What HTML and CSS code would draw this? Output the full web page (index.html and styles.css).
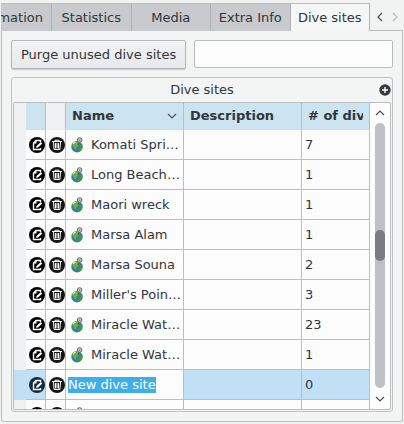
FILE: index.html
```html
<!DOCTYPE html>
<html lang="en">
<head>
<meta charset="utf-8">
<title>Dive sites</title>
<link rel="stylesheet" href="styles.css">
</head>
<body>
<svg class="defs" width="0" height="0" aria-hidden="true">
  <symbol id="edit" viewBox="0 0 16 16">
    <circle cx="8" cy="8" r="8" fill="var(--disc)"/>
    <path d="M11.5 5V3.5H7L4.5 6V12.5H11.5V11" fill="none" stroke="#fff" stroke-width="1.4"/>
    <path d="M4.5 6.5H7.5V3.5Z" fill="#fff"/>
    <path d="M7 10.8L7.5 8.9L11.8 4.9L13.3 6.4L9 10.4Z" fill="#fff"/>
  </symbol>
  <symbol id="trash" viewBox="0 0 16 16">
    <circle cx="8" cy="8" r="8" fill="#151515"/>
    <path d="M3 4.5H13M6 4.5V3.2H10V4.5M4.5 5L5.1 12.5H10.9L11.5 5M6.5 6V11.5M8 6V11.5M9.5 6V11.5" fill="none" stroke="#fff" stroke-width="1"/>
  </symbol>
  <symbol id="globe" viewBox="0 0 16 16">
    <circle cx="7" cy="9.8" r="5.7" fill="#3779b0"/>
    <path d="M2 8Q3 4.5 6.3 4.1L8.8 5.4L8 7L8.8 8.4L6.2 10.2L5.8 13L4.2 11.5L3.2 9.2Z" fill="#67b436"/>
    <path d="M9.4 8.3L12.4 7.5Q13 11 10.6 13.8L8.3 14.8L7.2 12.6L9.4 10.6Z" fill="#4a9a2b"/>
    <path d="M3 7Q4 5.4 5.6 5.2" fill="none" stroke="#d8f0ca" stroke-width="1.2"/>
    <circle cx="9.6" cy="3" r="2.3" fill="#d5d5d5" stroke="#666" stroke-width="1"/>
    <path d="M8.8 3.1H10.4M9 5.4L8 8" stroke="#555" stroke-width="1"/>
  </symbol>
</svg>
<nav class="tabs">
  <div class="tablist" role="tablist">
    <button class="tab first" role="tab"><span>Information</span></button>
    <button class="tab" role="tab">Statistics</button>
    <button class="tab" role="tab">Media</button>
    <button class="tab" role="tab">Extra Info</button>
    <button class="tab active" role="tab" aria-selected="true">Dive sites</button>
  </div>
  <div class="tabscroll">
    <button class="plain" aria-label="Previous tabs"><svg width="8" height="12" viewBox="0 0 8 12"><path d="M6 2L2 6L6 10" fill="none" stroke="#4d5154" stroke-width="1.2"/></svg></button>
    <button class="plain" aria-label="Next tabs" disabled><svg width="8" height="12" viewBox="0 0 8 12"><path d="M2 2L6 6L2 10" fill="none" stroke="#b5b7b9" stroke-width="1.2"/></svg></button>
  </div>
</nav>
<main class="panel">
  <div class="toolbar">
    <button class="purge">Purge unused dive sites</button>
    <input class="filter" type="text" aria-label="Filter dive sites">
  </div>
  <section class="group">
    <header class="grouphead">
      <h1>Dive sites</h1>
      <button class="plain add" aria-label="Add dive site"><svg width="12" height="12" viewBox="0 0 12 12"><circle cx="6" cy="6" r="5.7" fill="#35393c"/><path d="M6 3V9M3 6H9" stroke="#fff" stroke-width="1.4"/></svg></button>
    </header>
    <div class="frame">
      <div class="view">
        <table>
          <colgroup><col class="c-row"><col class="c-icon"><col class="c-icon"><col><col><col class="c-count"></colgroup>
          <thead>
            <tr><th class="stub"></th><th class="first"></th><th class="pale"></th><th><div class="sort">Name<svg width="10" height="6" viewBox="0 0 10 6"><path d="M1 1L5 5L9 1" fill="none" stroke="#4d5154" stroke-width="1.1"/></svg></div></th><th>Description</th><th><div class="clip"># of dives</div></th></tr>
          </thead>
          <tbody id="sites"></tbody>
        </table>
      </div>
      <div class="scrollbar">
        <button class="plain" aria-label="Scroll up"><svg width="10" height="6" viewBox="0 0 10 6"><path d="M1 5L5 1L9 5" fill="none" stroke="#4d5154" stroke-width="1.2"/></svg></button>
        <div class="track"><div class="thumb"></div></div>
        <button class="plain" aria-label="Scroll down"><svg width="10" height="6" viewBox="0 0 10 6"><path d="M1 1L5 5L9 1" fill="none" stroke="#4d5154" stroke-width="1.2"/></svg></button>
      </div>
    </div>
  </section>
</main>
<script src="sites.js"></script>
</body>
</html>
```
FILE: sites.js
```js
const sites = [
  ["Komati Springs", 7], ["Long Beach Simon's Town", 1], ["Maori wreck", 1],
  ["Marsa Alam", 1], ["Marsa Souna", 2], ["Miller's Point Slipway", 3],
  ["Miracle Waters", 23], ["Miracle Waters", 1], ["New dive site", 0, true],
  ["North Wind", 1]
];
const icon = (id, size) => `<svg width="${size}" height="${size}"><use href="#${id}"/></svg>`;
document.getElementById("sites").innerHTML = sites.map(([name, dives, editing]) => `
  <tr class="${editing ? "selected" : ""}">
    <th class="stub"></th>
    <td class="icon"><button class="plain" aria-label="Edit">${icon("edit", 16)}</button></td>
    <td class="icon blank"><button class="plain" aria-label="Delete">${icon("trash", 16)}</button></td>
    ${editing
      ? `<td class="blank editing"><input id="editor" aria-label="Name" value="${name}"></td>`
      : `<td><div class="name">${icon("globe", 16)}<span>${name}</span></div></td>`}
    <td></td><td>${dives}</td>
  </tr>`).join("");
const editor = document.getElementById("editor");
editor.focus({ preventScroll: true });
editor.select();
```
FILE: styles.css
```css
* { box-sizing: border-box; }
body {
  margin: 0;
  height: 100vh;
  padding: 3px 1px 2px;
  display: flex;
  flex-direction: column;
  background: #f1f3f3;
  color: #31363b;
  font: 13px/16px "DejaVu Sans", sans-serif;
}
button, input { font: inherit; color: inherit; }
.defs { position: absolute; }
.plain { display: flex; padding: 0; border: 0; background: none; }

.tabs { display: flex; flex: none; height: 28px; }
.tablist { display: flex; flex: 1; }
.tab {
  flex: 1 1 80px;
  padding: 0;
  border: 0;
  border-top: 1px solid #bbbdbf;
  border-right: 1px solid #b0b2b5;
  background: #c8cacd;
  white-space: nowrap;
}
.tab.first { flex: 0 0 51px; display: flex; align-items: center; justify-content: flex-end; padding-right: 8px; overflow: hidden; }
.tab.active { background: #f5f6f6; }
.tabscroll {
  flex: 0 0 33px;
  display: flex;
  align-items: center;
  justify-content: space-around;
  padding-left: 2px;
  border-bottom: 1px solid #bbbdbf;
}

.panel {
  flex: 1;
  min-height: 0;
  display: flex;
  flex-direction: column;
  gap: 8px;
  padding: 9px;
  border: 1px solid #bbbdbf;
  border-top: 0;
  border-radius: 0 0 3px 3px;
  background: #f3f4f4;
}
.toolbar { display: flex; gap: 8px; }
.purge {
  height: 29px;
  padding: 0 9px;
  border: 1px solid #b4b6b8;
  border-radius: 2px;
  background: linear-gradient(#f1f2f3, #e8e9ec);
  box-shadow: 0 1px 1px #c9cbcd;
}
.filter {
  flex: 1;
  min-width: 0;
  height: 28px;
  border: 1px solid #b9bbbd;
  border-radius: 2px;
  background: #fcfcfc;
}

.group {
  flex: 1;
  min-height: 0;
  display: flex;
  flex-direction: column;
  padding: 0 1px 1px;
  border: 1px solid #c0c2c4;
  border-radius: 3px;
}
.grouphead { display: grid; grid-template-columns: 12px 1fr 12px; align-items: center; height: 24px; }
.grouphead h1 { grid-column: 2; margin: 0; font: inherit; text-align: center; }
.frame {
  flex: 1;
  min-height: 0;
  display: flex;
  border: 1px solid #bbbdbf;
  border-radius: 2px;
  background: #fcfcfc;
  overflow: hidden;
}
.view { flex: 1; min-width: 0; overflow: hidden; }

table { width: 100%; table-layout: fixed; border-collapse: separate; border-spacing: 0; }
.c-row { width: 12px; }
.c-icon { width: 20px; }
.c-count { width: 68px; }
th, td {
  padding: 0 0 0 3px;
  border-right: 1px solid #bbbdbf;
  border-bottom: 1px solid #bbbdbf;
  overflow: hidden;
  white-space: nowrap;
  text-align: left;
}
td { height: 30px; }
thead th { height: 27px; padding: 0 6px; border-bottom-color: #c3dfeb; background: #cbe4f0; }
thead .pale, .stub, thead .stub { background: #eff0f2; }
.stub, thead .stub { padding: 0; border-right: 0; border-bottom: 0; }
thead .pale { border-bottom-color: #eff0f2; }
.sort { display: flex; align-items: center; justify-content: space-between; }
.clip { overflow: hidden; }
.icon { --disc: #000; padding: 0; }
.icon .plain { margin-left: 3px; }
.name { display: flex; align-items: center; gap: 5px; padding-left: 1px; }
.name svg { flex: none; }
.name span { overflow: hidden; text-overflow: ellipsis; }

.selected .stub, .selected td { background: #c1dff5; }
.selected .icon { --disc: #0f2b3d; }
.selected td.blank { background: #fcfcfc; }
.editing { padding: 0 2px; }
.editing input { display: block; width: 100%; height: 16px; padding: 0; border: 0; outline: 0; background: none; }
.editing input::selection { background: #3daee9; color: #fcfcfc; }

.scrollbar { flex: 0 0 20px; display: flex; flex-direction: column; align-items: center; justify-content: space-between; padding: 7px 0; }
.track { flex: 1; width: 10px; margin: 7px 0 8px; padding: 107px 0 0; border-radius: 5px; background: #bfc0c3; }
.thumb { height: 31px; border-radius: 5px; background: #7b7c80; }
```
